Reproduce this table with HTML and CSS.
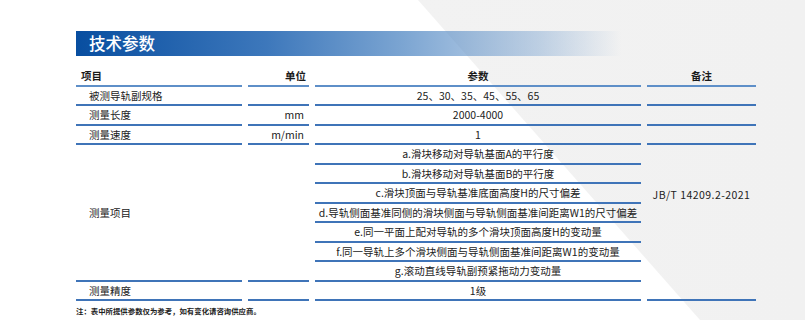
FILE: index.html
```html
<!DOCTYPE html>
<html lang="zh-CN">
<head>
    <meta charset="UTF-8">
    <title>技术参数</title>
    <link rel="stylesheet" href="styles.css">
</head>
<body>
    <div class="shade"></div>

    <div class="page">
        <div class="title-bar">技术参数</div>

        <table class="spec">
            <thead>
                <tr>
                    <th class="c-name">项目</th>
                    <th class="c-unit">单位</th>
                    <th class="c-val">参数</th>
                    <th class="c-note">备注</th>
                </tr>
            </thead>
            <tbody>
                <tr>
                    <td class="c-name">被测导轨副规格</td>
                    <td class="c-unit"></td>
                    <td class="c-val">25、30、35、45、55、65</td>
                    <td class="c-note"></td>
                </tr>
                <tr>
                    <td class="c-name">测量长度</td>
                    <td class="c-unit">mm</td>
                    <td class="c-val">2000-4000</td>
                    <td class="c-note"></td>
                </tr>
                <tr>
                    <td class="c-name">测量速度</td>
                    <td class="c-unit">m/min</td>
                    <td class="c-val">1</td>
                    <td class="c-note"></td>
                </tr>
                <tr>
                    <td class="c-name" rowspan="7">测量项目</td>
                    <td class="c-unit" rowspan="7"></td>
                    <td class="c-val">a.滑块移动对导轨基面A的平行度</td>
                    <td class="c-note std" rowspan="8">JB/T 14209.2-2021</td>
                </tr>
                <tr><td class="c-val">b.滑块移动对导轨基面B的平行度</td></tr>
                <tr><td class="c-val">c.滑块顶面与导轨基准底面高度H的尺寸偏差</td></tr>
                <tr><td class="c-val">d.导轨侧面基准同侧的滑块侧面与导轨侧面基准间距离W1的尺寸偏差</td></tr>
                <tr><td class="c-val">e.同一平面上配对导轨的多个滑块顶面高度H的变动量</td></tr>
                <tr><td class="c-val">f.同一导轨上多个滑块侧面与导轨侧面基准间距离W1的变动量</td></tr>
                <tr><td class="c-val">g.滚动直线导轨副预紧拖动力变动量</td></tr>
                <tr>
                    <td class="c-name">测量精度</td>
                    <td class="c-unit"></td>
                    <td class="c-val">1级</td>
                </tr>
            </tbody>
        </table>

        <p class="footnote">注：表中所提供参数仅为参考，如有变化请咨询供应商。</p>
    </div>
</body>
</html>
```

FILE: styles.css
```css
* {
    margin: 0;
    padding: 0;
    box-sizing: border-box;
}

body {
    font-family: "Noto Sans CJK SC", "Noto Sans", sans-serif;
    background: #fff;
    color: #222;
    width: 805px;
    height: 320px;
    position: relative;
    overflow: hidden;
}

/* light grey diagonal panel behind the page */
.shade {
    position: absolute;
    top: 0;
    left: 0;
    width: 100%;
    height: 100%;
    background: linear-gradient(90deg, #f3f3f3, #f1f1f1);
    clip-path: polygon(418px 0, 805px 0, 805px 320px, 700px 320px);
}

.page {
    position: relative;
    padding: 31px 0 0 76px;
    width: 756px;
}

.title-bar {
    height: 25px;
    width: 545px;
    padding-left: 13px;
    font-size: 16.5px;
    font-weight: 500;
    line-height: 25px;
    color: #fff;
    background: linear-gradient(90deg, rgba(8, 78, 160, 1) 0%, rgba(40, 105, 180, 0.9) 35%, rgba(80, 135, 195, 0.75) 60%, rgba(110, 155, 205, 0.4) 85%, rgba(120, 160, 210, 0) 100%);
}

.spec {
    margin: 11px 0 0 -6px;
    width: 692px;
    border-collapse: separate;
    border-spacing: 6px 0;
    font-size: 10.5px;
    table-layout: fixed;
}

.spec th,
.spec td {
    height: 19.5px;
    padding: 0;
    border-bottom: 2px solid #3f74b8;
    vertical-align: middle;
    white-space: nowrap;
    line-height: 17px;
}

.spec th {
    font-weight: 700;
    color: #1a1a1a;
    border-bottom-color: #5e8fc8;
}

.c-name {
    width: 166px;
    text-align: left;
    padding-left: 13px !important;
}

th.c-name {
    padding-left: 5px !important;
}

.c-unit {
    width: 61px;
    text-align: right;
    padding-right: 5px !important;
}

th.c-unit {
    padding-right: 3px !important;
}

.c-val {
    width: 326px;
    text-align: center;
}

.c-note {
    width: 109px;
    text-align: center;
}

.spec td.std {
    vertical-align: top;
    padding-top: 41px;
    letter-spacing: 0.45px;
}

.footnote {
    margin-top: 4px;
    font-size: 7.4px;
    font-weight: 700;
    color: #222;
}
```
